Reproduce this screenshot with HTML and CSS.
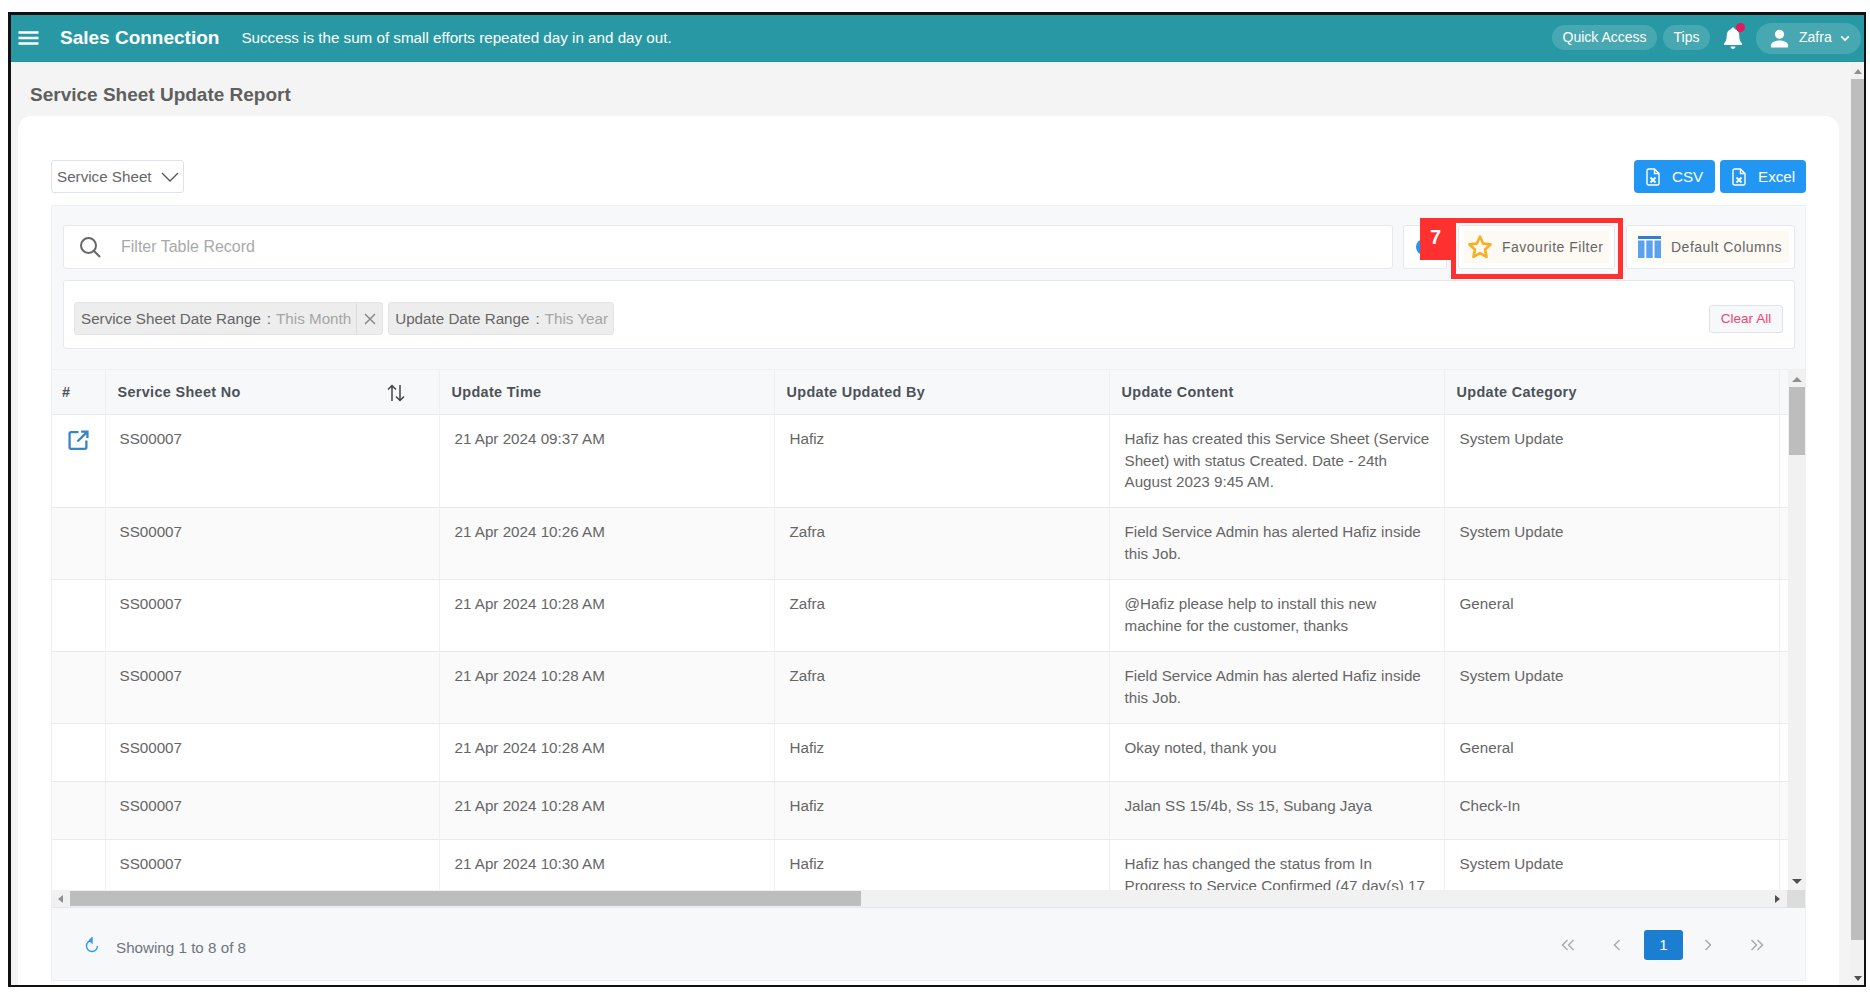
FILE: index.html
```html
<!DOCTYPE html>
<html lang="en">
<head>
<meta charset="utf-8">
<title>Service Sheet Update Report</title>
<link rel="stylesheet" href="styles.css">
</head>
<body>
<div class="frame">
  <header class="topbar">
    <svg class="menu-icon" viewBox="0 0 20 14"><path d="M0 1.500h20M0 7h20M0 12.500h20"/></svg>
    <span class="brand">Sales Connection</span>
    <span class="motto">Success is the sum of small efforts repeated day in and day out.</span>
    <div class="top-actions">
      <span class="pill">Quick Access</span>
      <span class="pill">Tips</span>
      <span class="bell">
        <svg viewBox="0 0 20 24"><path d="M10 1.500c1 0 1.600.7 1.600 1.600 3.300.8 4.700 3.500 4.700 6.900 0 3.400.8 5.600 2.700 7.600v1.400H1v-1.400c1.900-2 2.700-4.200 2.700-7.600 0-3.400 1.400-6.100 4.700-6.900 0-.9.6-1.600 1.600-1.600zM7.600 20.500h4.800c0 1.300-1 2.500-2.400 2.500s-2.400-1.200-2.400-2.500z"/></svg>
        <i class="bell-dot"></i>
      </span>
      <span class="user">
        <svg class="user-icon" viewBox="0 0 20 20"><circle cx="10" cy="5.500" r="4.800"/><path d="M1 19.500v-2.500c0-3.300 5-5 9-5s9 1.700 9 5v2.500z"/></svg>
        <span>Zafra</span>
        <svg class="user-chev" viewBox="0 0 12 8"><path d="M1.500 1.500 6 6l4.500-4.500"/></svg>
      </span>
    </div>
  </header>
  <div class="workspace">
    <main class="main">
      <h1 class="page-title">Service Sheet Update Report</h1>
      <section class="card">
        <div class="toolbar">
          <div class="select">
            <span>Service Sheet</span>
            <svg viewBox="0 0 18 10"><path d="M1 1l8 8 8-8"/></svg>
          </div>
          <div class="exports">
            <button class="export">
              <svg viewBox="0 0 14 18"><path class="doc" d="M1 2.500C1 1.600 1.600 1 2.500 1H8.500L13 5.500V15.500C13 16.400 12.400 17 11.500 17H2.500C1.600 17 1 16.400 1 15.500zM8.500 1V5.500H13"/><path class="x" d="M4.500 9.500l5 5M9.500 9.500l-5 5"/></svg>
              CSV
            </button>
            <button class="export export-wide">
              <svg viewBox="0 0 14 18"><path class="doc" d="M1 2.500C1 1.600 1.600 1 2.500 1H8.500L13 5.500V15.500C13 16.400 12.400 17 11.500 17H2.500C1.600 17 1 16.400 1 15.500zM8.500 1V5.500H13"/><path class="x" d="M4.500 9.500l5 5M9.500 9.500l-5 5"/></svg>
              Excel
            </button>
          </div>
        </div>
        <div class="panel">
          <div class="search-row">
            <div class="search">
              <svg viewBox="0 0 22 22"><circle cx="9.500" cy="9.500" r="7.500"/><path d="M15 15l6 6"/></svg>
              <span>Filter Table Record</span>
            </div>
            <div class="tool-btn tool-refresh"><i class="blue-dot"></i></div>
            <div class="tool-btn tool-fav">
              <div class="tool-inner">
                <svg class="star" viewBox="0 0 24 24"><path d="M12 2.500l2.900 6.300 6.800.8-5 4.700 1.300 6.800-6-3.400-6 3.400 1.300-6.800-5-4.700 6.800-.8z"/></svg>
                <span>Favourite Filter</span>
              </div>
              <div class="callout"></div>
              <div class="callout-num">7</div>
            </div>
            <div class="tool-btn tool-cols">
              <div class="tool-inner">
                <svg class="cols" viewBox="0 0 23 22"><path class="cols-top" d="M0 0h23v3H0z"/><path d="M0 4.500h6.500V22H0zM8.300 4.500h6.400V22H8.300zM16.500 4.500H23V22h-6.500z"/></svg>
                <span>Default Columns</span>
              </div>
            </div>
          </div>
          <div class="filters">
            <div class="chip">
              <span class="chip-text">Service Sheet Date Range<em>:</em><b>This Month</b></span>
              <span class="chip-x"><svg viewBox="0 0 12 12"><path d="M1 1l10 10M11 1L1 11"/></svg></span>
            </div>
            <div class="chip">
              <span class="chip-text">Update Date Range<em>:</em><b>This Year</b></span>
            </div>
            <button class="clear">Clear All</button>
          </div>
          <div class="table-area">
            <div class="table-view">
              <table class="grid">
                <colgroup>
                  <col class="c-idx"><col class="c-no"><col class="c-std"><col class="c-std"><col class="c-std"><col class="c-std"><col class="c-last">
                </colgroup>
                <thead>
                  <tr>
                    <th class="idx">#</th>
                    <th><div class="th-sort">Service Sheet No
                      <svg viewBox="0 0 18 18"><path d="M5 17V1.500M1 5.500l4-4 4 4M13 1v15.500M9 12.500l4 4 4-4"/></svg></div></th>
                    <th>Update Time</th>
                    <th>Update Updated By</th>
                    <th>Update Content</th>
                    <th>Update Category</th>
                    <th></th>
                  </tr>
                </thead>
                <tbody>
                  <tr>
                    <td class="idx"><svg class="open" viewBox="0 0 20 20"><path d="M10 2H3C2 2 1.500 2.500 1.500 3.500v13c0 1 .5 1.500 1.500 1.500h13c1 0 1.500-.5 1.500-1.500V10M12.500 1.500h6v6M18 2l-9 9"/></svg></td>
                    <td class="sheet-no">SS00007</td><td>21 Apr 2024 09:37 AM</td><td>Hafiz</td>
                    <td>Hafiz has created this Service Sheet (Service Sheet) with status Created. Date - 24th August 2023 9:45 AM.</td>
                    <td>System Update</td><td></td>
                  </tr>
                  <tr>
                    <td class="idx"></td><td class="sheet-no">SS00007</td><td>21 Apr 2024 10:26 AM</td><td>Zafra</td>
                    <td>Field Service Admin has alerted Hafiz inside this Job.</td><td>System Update</td><td></td>
                  </tr>
                  <tr>
                    <td class="idx"></td><td class="sheet-no">SS00007</td><td>21 Apr 2024 10:28 AM</td><td>Zafra</td>
                    <td>@Hafiz please help to install this new machine for the customer, thanks</td><td>General</td><td></td>
                  </tr>
                  <tr>
                    <td class="idx"></td><td class="sheet-no">SS00007</td><td>21 Apr 2024 10:28 AM</td><td>Zafra</td>
                    <td>Field Service Admin has alerted Hafiz inside this Job.</td><td>System Update</td><td></td>
                  </tr>
                  <tr>
                    <td class="idx"></td><td class="sheet-no">SS00007</td><td>21 Apr 2024 10:28 AM</td><td>Hafiz</td>
                    <td>Okay noted, thank you</td><td>General</td><td></td>
                  </tr>
                  <tr>
                    <td class="idx"></td><td class="sheet-no">SS00007</td><td>21 Apr 2024 10:28 AM</td><td>Hafiz</td>
                    <td>Jalan SS 15/4b, Ss 15, Subang Jaya</td><td>Check-In</td><td></td>
                  </tr>
                  <tr>
                    <td class="idx"></td><td class="sheet-no">SS00007</td><td>21 Apr 2024 10:30 AM</td><td>Hafiz</td>
                    <td>Hafiz has changed the status from In Progress to Service Confirmed (47 day(s) 17 hour(s))</td><td>System Update</td><td></td>
                  </tr>
                </tbody>
              </table>
            </div>
            <div class="vscroll">
              <i class="arrow arrow-up"></i>
              <i class="vthumb"></i>
              <i class="arrow arrow-down"></i>
            </div>
          </div>
          <div class="hscroll">
            <i class="arrow arrow-left"></i>
            <i class="hthumb"></i>
            <i class="arrow arrow-right"></i>
            <i class="corner"></i>
          </div>
          <footer class="pager-bar">
            <svg class="reload" viewBox="0 0 14 16"><path d="M7 3.500A5.500 5.500 0 1 0 12.500 9M7 .8v5L4.500 3.300z"/></svg>
            <span class="showing">Showing 1 to 8 of 8</span>
            <nav class="pager">
              <span class="page page-back"><svg viewBox="0 0 14 12"><path d="M6.500 1L1.500 6l5 5M12.500 1l-5 5 5 5"/></svg></span>
              <span class="page page-back"><svg viewBox="0 0 14 12"><path d="M9.500 1l-5 5 5 5"/></svg></span>
              <span class="page page-on">1</span>
              <span class="page"><svg viewBox="0 0 14 12"><path d="M4.500 1l5 5-5 5"/></svg></span>
              <span class="page"><svg viewBox="0 0 14 12"><path d="M1.500 1l5 5-5 5M7.500 1l5 5-5 5"/></svg></span>
            </nav>
          </footer>
        </div>
      </section>
    </main>
    <div class="page-scroll">
      <i class="arrow arrow-up"></i>
      <i class="page-thumb"></i>
      <i class="arrow arrow-down"></i>
    </div>
  </div>
</div>
</body>
</html>
```
FILE: styles.css
```css
* { box-sizing: border-box; }
html, body { margin: 0; height: 100%; }
body {
  background: #fff;
  padding: 12px 0 0 8px;
  font-family: "Liberation Sans", Arial, sans-serif;
  font-size: 15.2px;
  line-height: 21.6px;
  color: #666;
  overflow: hidden;
}
svg { display: block; flex: none; }
i { display: block; }

.frame {
  width: 1858px;
  height: 975px;
  border: solid #111;
  border-width: 3px 2px 2px 3px;
  display: flex;
  flex-direction: column;
  overflow: hidden;
  background: #f4f4f4;
}

/* top bar */
.topbar {
  height: 47px;
  flex: none;
  background: #2899a4;
  border-bottom: 1px solid #23919c;
  color: #fff;
  display: flex;
  align-items: center;
  padding: 0 3px 0 7px;
}
.menu-icon { width: 21px; height: 14px; stroke: #fff; stroke-width: 2.600; fill: none; }
.brand { font-size: 19px; font-weight: 700; margin-left: 21px; }
.motto { font-size: 15.2px; margin-left: 22px; }
.top-actions { margin-left: auto; display: flex; align-items: center; }
.pill {
  height: 25px;
  padding: 0 10.5px;
  border-radius: 13px;
  background: rgba(255, 255, 255, .15);
  font-size: 14px;
  line-height: 24px;
  margin-left: 6px;
  margin-top: -1px;
}
.bell { position: relative; width: 22px; height: 24px; margin: 0 11px 0 13px; }
.bell svg { width: 20px; height: 24px; fill: #fff; }
.bell-dot {
  position: absolute; left: 13px; top: -3px;
  width: 9px; height: 9px; border-radius: 50%;
  background: #e8175d;
}
.user {
  width: 105px;
  height: 31px;
  border-radius: 16px;
  background: rgba(255, 255, 255, .15);
  display: flex;
  align-items: center;
  padding-left: 14px;
  font-size: 14px;
}
.user-icon { width: 19px; height: 19px; fill: #fff; margin-right: 10px; }
.user-chev { width: 10px; height: 7px; margin-left: 8px; stroke: #fff; stroke-width: 2; fill: none; }

/* shell */
.workspace { flex: 1; min-height: 0; display: flex; }
.main { flex: 1; min-width: 0; padding: 0 12px 0 7px; display: flex; flex-direction: column; overflow: hidden; }
.page-title {
  margin: 0;
  height: 54px;
  flex: none;
  padding: 10px 0 0 12px;
  font-size: 19px;
  line-height: 46px;
  font-weight: 700;
  color: #5f5f5f;
}
.card {
  flex: 1;
  min-height: 0;
  background: #fff;
  border-radius: 14px 14px 0 0;
  padding: 44px 33px 4px;
  display: flex;
  flex-direction: column;
}

.page-scroll {
  width: 13px;
  flex: none;
  background: #f1f1f1;
  display: flex;
  flex-direction: column;
  align-items: center;
  padding-top: 7px;
}
.page-thumb { width: 13px; height: 861px; background: #bdbdbd; margin: 5px 0 36px; }

.arrow { width: 0; height: 0; border-style: solid; border-color: transparent; flex: none; }
.arrow-up { border-width: 0 4px 5px; border-bottom-color: #8f8f8f; }
.arrow-down { border-width: 5px 4px 0; border-top-color: #505050; }
.arrow-left { border-width: 4px 5px 4px 0; border-right-color: #8f8f8f; }
.arrow-right { border-width: 4px 0 4px 5px; border-left-color: #505050; }

/* toolbar */
.toolbar { display: flex; justify-content: space-between; height: 33px; flex: none; margin-bottom: 12px; }
.select {
  width: 133px;
  border: 1px solid #dfe3e8;
  border-radius: 3px;
  display: flex;
  align-items: center;
  padding: 0 4px 0 5px;
  justify-content: space-between;
}
.select svg { width: 18px; height: 10px; stroke: #555; stroke-width: 1.300; fill: none; }
.exports { display: flex; gap: 5px; }
.export {
  width: 81px;
  border: 0;
  border-radius: 4px;
  background: #2196f3;
  color: #fff;
  font: 15.2px "Liberation Sans", Arial, sans-serif;
  display: flex;
  align-items: center;
  gap: 12px;
  padding: 0 0 0 12px;
}
.export-wide { width: 86px; }
.export svg { width: 14px; height: 18px; fill: none; stroke: #fff; }
.export .doc { stroke-width: 1.400; }
.export .x { stroke-width: 1.800; }

/* panel */
.panel {
  flex: 1;
  min-height: 0;
  background: #f7f8fa;
  border: 1px solid #eef0f2;
  padding-top: 19px;
  display: flex;
  flex-direction: column;
}
.search-row { display: flex; height: 44px; flex: none; margin: 0 10px 0 11px; }
.search {
  flex: 1;
  background: #fff;
  border: 1px solid #e6e8eb;
  border-radius: 3px;
  display: flex;
  align-items: center;
  padding-left: 15px;
  font-size: 16px;
  color: #a9a9a9;
}
.search svg { width: 22px; height: 22px; stroke: #666; stroke-width: 2; fill: none; margin-right: 20px; }
.tool-btn {
  position: relative;
  background: #fff;
  border: 1px solid #e6e8eb;
  border-radius: 3px;
  margin-left: 11px;
  display: flex;
  padding: 5px;
}
.tool-refresh { width: 44px; margin-left: 10px; padding: 0; align-items: center; }
.blue-dot { width: 16px; height: 16px; border-radius: 50%; background: #2196f3; box-shadow: 0 0 0 4px #fff; margin-left: 12px; }
.tool-fav { width: 157px; }
.tool-cols { width: 169px; }
.tool-inner {
  flex: 1;
  background: #fdf9f3;
  display: flex;
  align-items: center;
  font-size: 14px;
  line-height: 24px;
  letter-spacing: .5px;
  padding: 0 0 0 3px;
}
.star { width: 26px; height: 26px; fill: none; stroke: #f6b026; stroke-width: 2.500; stroke-linejoin: round; margin-right: 9px; }
.cols { width: 23px; height: 22px; fill: #5aa2ef; margin: 0 10px 0 3px; }
.cols-top { fill: #2f7fd6; }
.callout {
  position: absolute;
  left: -8px; top: -8px;
  width: 172px; height: 61px;
  border: 5px solid #ff3030;
}
.callout-num {
  position: absolute;
  left: -39px; top: -8px;
  width: 31px; height: 42px;
  background: #ff3030;
  color: #fff;
  font-size: 20px;
  font-weight: 700;
  line-height: 38px;
  text-align: center;
}

/* filters */
.filters {
  height: 69px;
  flex: none;
  margin: 11px 10px 20px 11px;
  background: #fff;
  border: 1px solid #e6e8eb;
  border-radius: 3px;
  display: flex;
  align-items: center;
  padding: 8px 11px 0 10px;
  gap: 5px;
}
.chip {
  height: 33px;
  background: #ededed;
  border: 1px solid #e4e4e4;
  border-radius: 3px;
  display: flex;
  align-items: center;
}
.chip-text { padding: 0 5px 0 6px; color: #666; }
.chip-text em { font-style: normal; margin: 0 5px 0 6px; }
.chip-text b { font-weight: 400; color: #a5a5a5; }
.chip-x { height: 100%; width: 26px; border-left: 1px solid #dedede; display: flex; align-items: center; justify-content: center; }
.chip-x svg { width: 12px; height: 12px; stroke: #888; stroke-width: 1.500; }
.clear {
  margin-left: auto;
  width: 74px;
  height: 28px;
  background: #f7f8fa;
  border: 1px solid #e0e2e5;
  border-radius: 3px;
  color: #f5426c;
  font: 13.5px "Liberation Sans", Arial, sans-serif;
  padding: 0;
}

/* table */
.table-area { height: 521px; flex: none; display: flex; }
.table-view { flex: 1; min-width: 0; overflow: hidden; }
.grid { border-collapse: separate; border-spacing: 0; table-layout: fixed; width: 1928px; background: #fff; }
.c-idx { width: 54px; }
.c-no { width: 334px; }
.c-std { width: 335px; }
.c-last { width: 200px; }
.grid th {
  height: 46px;
  padding: 2px 12px 0 11.5px;
  text-align: left;
  font-size: 14.4px;
  font-weight: 700;
  letter-spacing: .35px;
  color: #4c5258;
  background: #f7f8fa;
  border-top: 1px solid #eef0f2;
  border-right: 1px solid #eef0f2;
  border-bottom: 1px solid #e8eaed;
}
.grid td {
  height: 58px;
  padding: 13px 10px 13px 14.5px;
  vertical-align: top;
  border-right: 1px solid #eef0f2;
  border-bottom: 1px solid #e8eaed;
}
.grid tbody tr:first-child td { height: 93px; }
.grid tbody tr:nth-child(2) td,
.grid tbody tr:nth-child(3) td,
.grid tbody tr:nth-child(4) td { height: 72px; }
.grid tbody tr:nth-child(even) td { background: #fafafa; }
.grid .idx { padding-left: 10px; padding-right: 0; }
.grid .sheet-no { padding-left: 13.5px; }
.th-sort { display: flex; align-items: center; justify-content: space-between; padding-right: 22px; }
.th-sort svg { width: 18px; height: 18px; stroke: #444; stroke-width: 1.500; fill: none; }
.open { width: 21px; height: 21px; margin: 2px 0 0 6px; stroke: #3a85c6; stroke-width: 2.200; fill: none; }

.vscroll {
  width: 17px;
  flex: none;
  background: #f1f1f1;
  display: flex;
  flex-direction: column;
  align-items: center;
  padding-top: 8px;
}
.vscroll .arrow-up { border-width: 0 5px 5px; }
.vscroll .arrow-down { border-width: 5px 5px 0; margin-top: 424px; }
.vthumb { width: 16px; height: 68px; background: #bdbdbd; margin: 5px 0 0; }

.hscroll {
  height: 18px;
  flex: none;
  background: #f1f1f1;
  border-bottom: 1px solid #e4e6e9;
  display: flex;
  align-items: center;
  padding-left: 6px;
}
.hscroll .arrow-left { border-width: 4px 5px 4px 0; }
.hthumb { width: 791px; height: 15px; background: #bdbdbd; margin-left: 7px; }
.hscroll .arrow-right { margin-left: 914px; }
.corner { width: 18px; height: 18px; margin-left: auto; background: #dcdcdc; }

/* footer */
.pager-bar { flex: 1; min-height: 0; display: flex; align-items: center; padding: 7px 24px 0 33px; }
.reload { width: 14px; height: 16px; stroke: #2d9bf0; stroke-width: 1.400; fill: none; margin: 0 18px 5px 0; }
.showing { color: #6f767d; margin-left: -1px; }
.pager { margin-left: auto; display: flex; align-items: center; margin-bottom: 6px; }
.page { width: 49px; height: 30px; display: flex; align-items: center; justify-content: center; }
.page-back { padding-right: 5px; }
.page svg { width: 14px; height: 12px; stroke: #a6acb2; stroke-width: 1.500; fill: none; }
.page-on { width: 39px; border-radius: 3px; background: #1c7ed0; color: #fff; font-size: 15px; }
```
